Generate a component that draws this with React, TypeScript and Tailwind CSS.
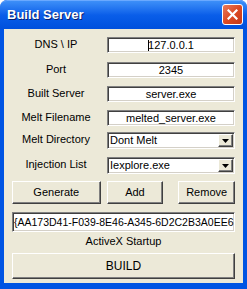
import React from "react";

const sunken =
  "border border-t-[#808080] border-l-[#808080] border-b-white border-r-white shadow-[inset_1px_1px_0_#404040,inset_-1px_-1px_0_#d4d0c8] bg-white";
const raised =
  "border border-t-white border-l-white border-b-[#404040] border-r-[#404040] shadow-[inset_-1px_-1px_0_#808080] bg-[#ece9d8] flex items-center justify-center text-black";

const TextRow = ({ label, value, caret, mt }: { label: string; value: string; caret?: boolean; mt: string }) => (
  <div className={`flex items-center ${mt}`}>
    <div className="w-[88px] text-center leading-none -mt-[2px]">{label}</div>
    <div className={`ml-[7px] w-[128px] h-[16px] ${sunken} flex items-center justify-center leading-none`}>
      {caret && <span className="inline-block w-px h-[11px] bg-black mr-[-1px]" />}
      {value}
    </div>
  </div>
);

const ComboRow = ({ label, value, mt }: { label: string; value: string; mt: string }) => (
  <div className={`flex items-center ${mt}`}>
    <div className="w-[88px] text-center leading-none -mt-[2px]">{label}</div>
    <div className={`ml-[7px] w-[128px] h-[17px] ${sunken} flex items-center pl-[2px] pr-[1px] leading-none`}>
      <span className="flex-1">{value}</span>
      <div className={`w-[15px] h-[13px] ${raised}`}>
        <svg width="7" height="4" viewBox="0 0 7 4">
          <path d="M0 0h7L3.5 4z" fill="#000" />
        </svg>
      </div>
    </div>
  </div>
);

export default function App() {
  return (
    <div
      className="w-[247px] h-[289px] rounded-t-[7px] bg-[#0054e3] flex flex-col text-[11px] text-black overflow-hidden"
      style={{ fontFamily: '"Liberation Sans", Arial, sans-serif' }}
    >
      <div className="h-[29px] shrink-0 rounded-t-[7px] bg-gradient-to-b from-[#3d8ff8] via-[#0a5ee9] to-[#0050dd] border-t border-[#6aa9ff] flex items-center pl-[7px] pr-[4px]">
        <span className="flex-1 text-white font-bold text-[13px] [text-shadow:1px_1px_0_#0a1e6b] -mt-[1px]">
          Build Server
        </span>
        <div className="w-[21px] h-[21px] rounded-[3px] border border-white bg-gradient-to-br from-[#e8795a] via-[#dd4a22] to-[#c3381a] flex items-center justify-center -mt-[2px]">
          <svg width="11" height="11" viewBox="0 0 11 11">
            <path d="M1.5 1.5l8 8M9.5 1.5l-8 8" stroke="#fff" strokeWidth="2.2" strokeLinecap="square" />
          </svg>
        </div>
      </div>
      <div className="mx-[4px] mb-[6px] flex-1 bg-[#ece9d8] px-[8px] flex flex-col">
        <TextRow label="DNS \ IP" value="127.0.0.1" caret mt="mt-[8px]" />
        <TextRow label="Port" value="2345" mt="mt-[9px]" />
        <TextRow label="Built Server" value="server.exe" mt="mt-[8px]" />
        <TextRow label="Melt Filename" value="melted_server.exe" mt="mt-[8px]" />
        <ComboRow label="Melt Directory" value="Dont Melt" mt="mt-[6px]" />
        <ComboRow label="Injection List" value="Iexplore.exe" mt="mt-[8px]" />
        <div className="flex mt-[7px]">
          <div className={`w-[89px] h-[23px] ${raised}`}>Generate</div>
          <div className={`ml-[6px] w-[57px] h-[23px] ${raised}`}>Add</div>
          <div className={`ml-[15px] w-[57px] h-[23px] ${raised}`}>Remove</div>
        </div>
        <div className={`mt-[8px] h-[20px] ${sunken} flex items-center pl-[1px] overflow-hidden whitespace-nowrap leading-none text-[10.5px]`}>
          {"{AA173D41-F039-8E46-A345-6D2C2B3A0EE6"}
        </div>
        <div className="text-center mt-[3px] leading-[13px]">ActiveX Startup</div>
        <div className={`mt-[5px] h-[26px] ${raised} text-[12px]`}>BUILD</div>
      </div>
    </div>
  );
}
